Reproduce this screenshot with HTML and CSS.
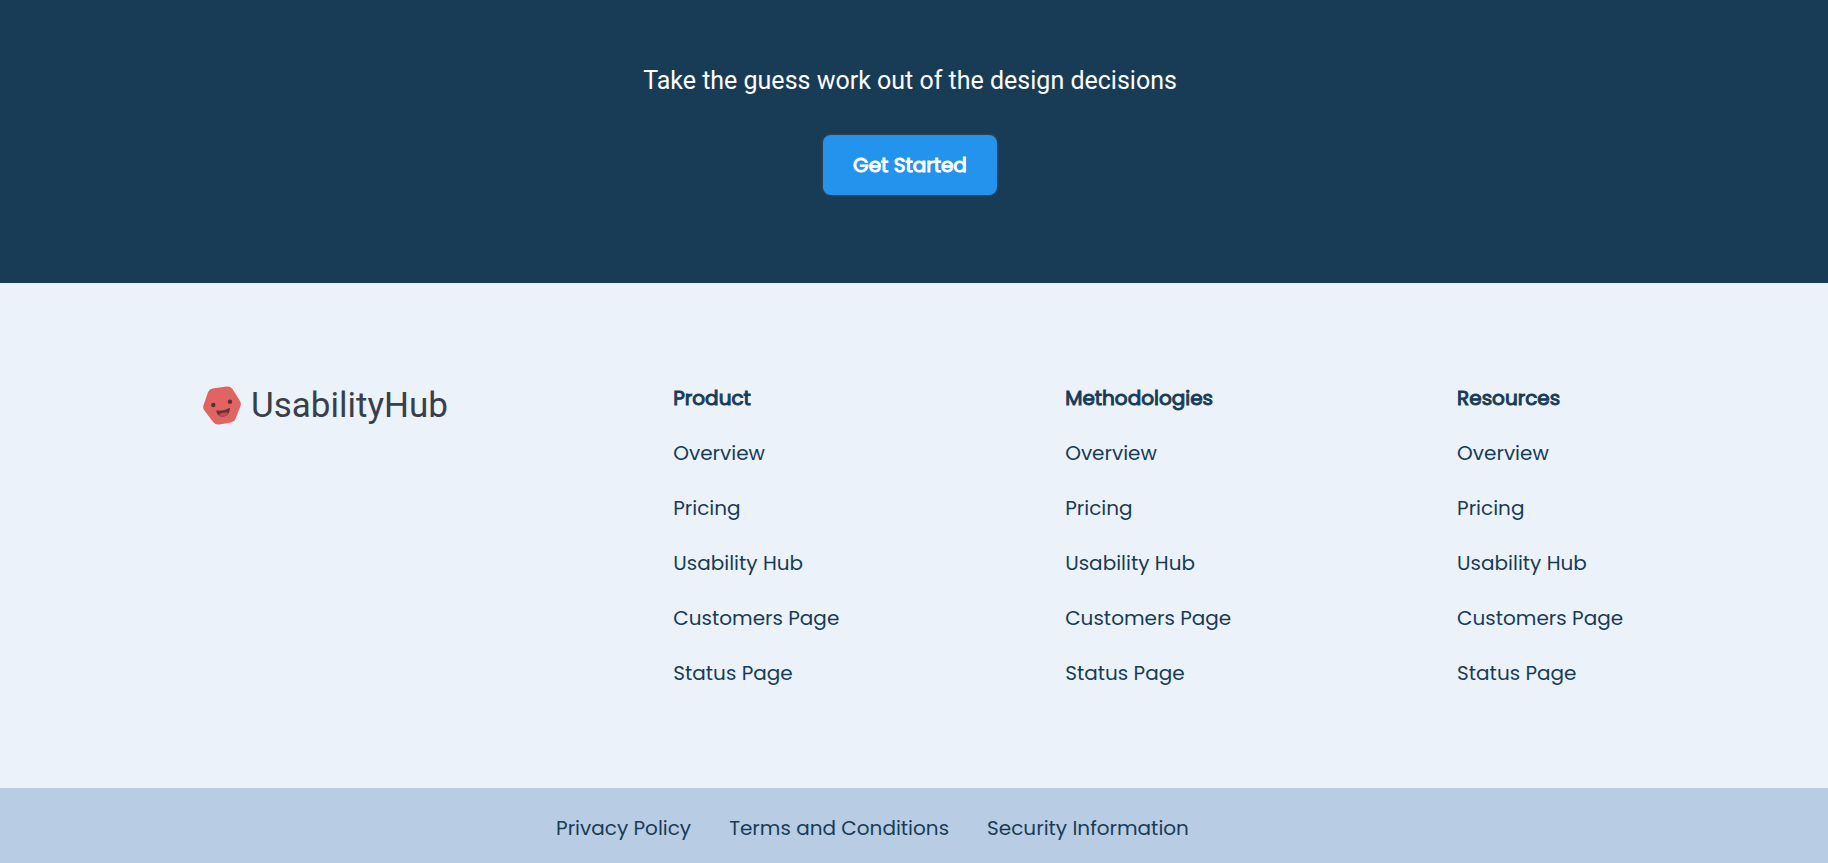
FILE: index.html
```html
<!DOCTYPE html>
<html lang="en">
<head>
<meta charset="utf-8">
<title>UsabilityHub</title>
<meta name="viewport" content="width=device-width, initial-scale=1">
<link rel="stylesheet" href="styles.css">
</head>
<body>
<section class="cta">
  <p class="cta-text">Take the guess work out of the design decisions</p>
  <button class="cta-button" type="button">Get Started</button>
</section>
<footer>
  <div class="footer-main">
    <a class="logo" href="#">
      <svg class="logo-mark" viewBox="0 0 38 39" aria-hidden="true">
        <path fill="#e06461" d="M9.500 2.600 23.500 .5Q27 0 29.300 2.700L36.700 14.400Q38.500 17.300 37.500 20L32.300 33.300Q31.200 36 28 36.500L16 38.500Q12.500 39 10.300 36.200L1.200 24.300Q-.5 22 .5 19.200L5 6.200Q6.200 3.100 9.500 2.600Z"/>
        <circle cx="10.300" cy="19" r="2.200" fill="#5a3038"/>
        <circle cx="27" cy="15.800" r="2.200" fill="#5a3038"/>
        <path fill="#6b2f37" d="M14.200 24.600C18 25.200 23 24 26 22.100Q27 21.600 26.900 23C26.500 27 24.400 30 20.600 30.600C17 31.200 14.300 29.300 13.400 25.800Q13.100 24.400 14.200 24.600Z"/>
        <path fill="#b84f51" d="M15.600 28.500C17.600 26.700 22 25.900 25.300 26.700C24.300 28.700 22.900 30 20.500 30.400C18.400 30.700 16.700 30 15.600 28.500Z"/>
      </svg>
      <span class="logo-name">UsabilityHub</span>
    </a>
    <nav class="column" aria-labelledby="product">
      <h2 class="column-title" id="product">Product</h2>
      <a class="link" href="#">Overview</a>
      <a class="link" href="#">Pricing</a>
      <a class="link" href="#">Usability Hub</a>
      <a class="link" href="#">Customers Page</a>
      <a class="link" href="#">Status Page</a>
    </nav>
    <nav class="column" aria-labelledby="methodologies">
      <h2 class="column-title" id="methodologies">Methodologies</h2>
      <a class="link" href="#">Overview</a>
      <a class="link" href="#">Pricing</a>
      <a class="link" href="#">Usability Hub</a>
      <a class="link" href="#">Customers Page</a>
      <a class="link" href="#">Status Page</a>
    </nav>
    <nav class="column" aria-labelledby="resources">
      <h2 class="column-title" id="resources">Resources</h2>
      <a class="link" href="#">Overview</a>
      <a class="link" href="#">Pricing</a>
      <a class="link" href="#">Usability Hub</a>
      <a class="link" href="#">Customers Page</a>
      <a class="link" href="#">Status Page</a>
    </nav>
  </div>
  <nav class="legal" aria-label="Legal">
    <a class="link" href="#">Privacy Policy</a>
    <a class="link" href="#">Terms and Conditions</a>
    <a class="link" href="#">Security Information</a>
  </nav>
</footer>
</body>
</html>
```
FILE: styles.css
```css
* {
  box-sizing: border-box;
}

body {
  margin: 0;
  background: #ebf2fa;
  color: #193c56;
  font-family: Poppins, Inter, sans-serif;
  font-size: 20px;
  line-height: 30px;
}

.cta {
  display: flex;
  flex-direction: column;
  align-items: center;
  gap: 39px;
  padding: 66px 8px 88px 0;
  background: #193c56;
}

.cta-text {
  margin: 0;
  color: #fff;
  font-family: Roboto, sans-serif;
  font-size: 25px;
}

.cta-button {
  padding: 15px 30px;
  border: 0;
  border-radius: 8px;
  background: #2393ee;
  box-shadow: 0 0 3px rgba(130, 110, 100, 0.5);
  color: #fff;
  font: inherit;
  -webkit-text-stroke: 1px currentColor;
}

.footer-main {
  display: grid;
  grid-template-columns: 22fr 15fr 15fr 15fr;
  gap: 224px;
  padding: 100px 203px;
}

.logo {
  display: flex;
  align-items: center;
  align-self: start;
  gap: 10px;
  height: 44px;
  color: #393f4a;
  text-decoration: none;
}

.logo-mark {
  flex: none;
  width: 38px;
}

.logo-name {
  padding-top: 2px;
  font-family: Roboto, sans-serif;
  font-size: 35px;
}

.column {
  display: flex;
  flex-direction: column;
  align-items: flex-start;
  gap: 25px;
  white-space: nowrap;
}

.column-title {
  margin: 0;
  font-size: 20px;
  font-weight: 400;
  -webkit-text-stroke: 1px currentColor;
}

.link {
  color: inherit;
  text-decoration: none;
}

.legal {
  display: flex;
  justify-content: center;
  gap: 38px;
  padding: 25px 83px 20px 0;
  background: #b8cce4;
}
```
